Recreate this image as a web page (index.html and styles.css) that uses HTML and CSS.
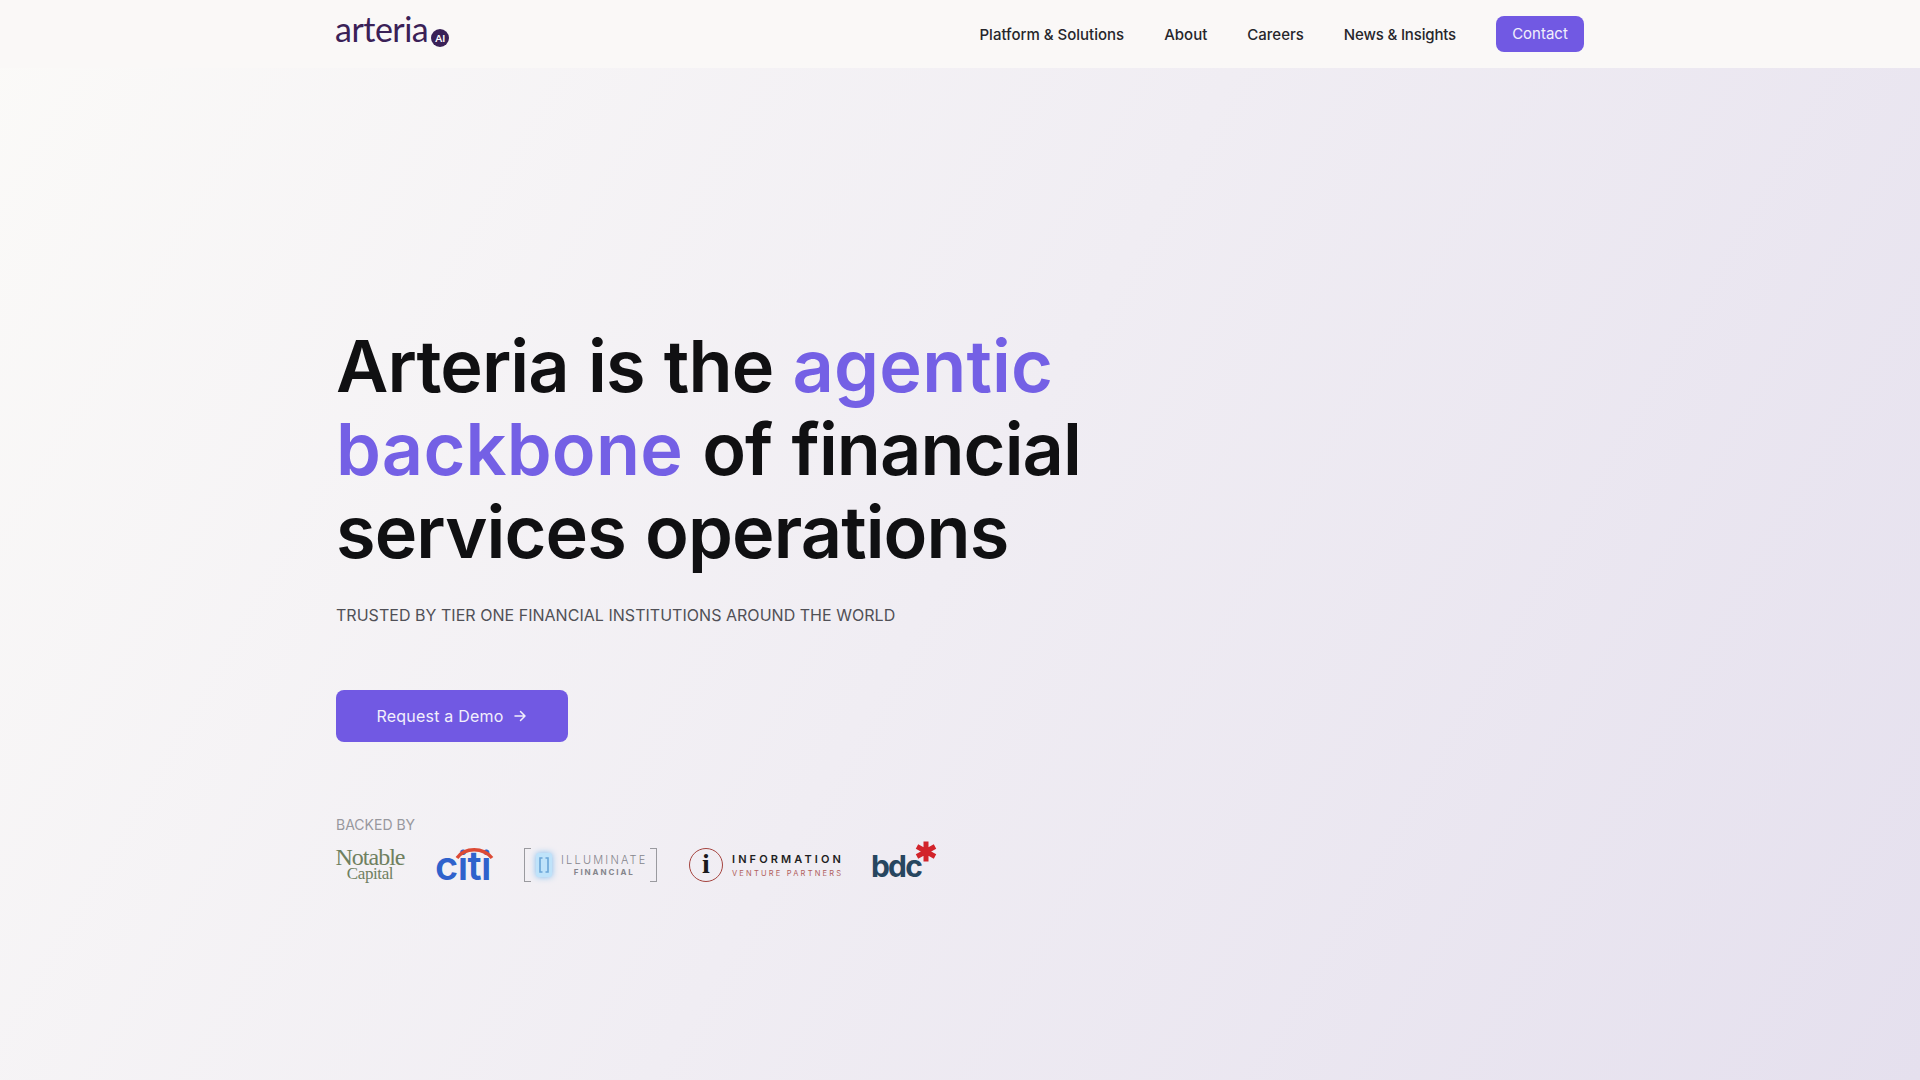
FILE: index.html
```html
<!DOCTYPE html>
<html lang="en">
<head>
  <meta charset="UTF-8" />
  <meta name="viewport" content="width=device-width, initial-scale=1" />
  <title>Arteria AI</title>
  <link rel="stylesheet" href="styles.css">
</head>
<body>
  <header class="site-header">
    <div class="container header-row">
      <a class="brand" href="#">arteria<span class="brand-badge">AI</span></a>
      <nav class="main-nav">
        <a href="#">Platform &amp; Solutions</a>
        <a href="#">About</a>
        <a href="#">Careers</a>
        <a class="nav-news" href="#">News &amp; Insights</a>
        <a class="contact-btn" href="#">Contact</a>
      </nav>
    </div>
  </header>

  <main class="hero">
    <div class="container">
      <h1>Arteria is the <span class="accent">agentic<br>backbone</span> of financial<br>services operations</h1>
      <p class="trusted">Trusted by tier one financial institutions around the world</p>
      <a class="demo-btn" href="#">Request a Demo
        <svg width="14" height="14" viewBox="0 0 14 14" fill="none" stroke="currentColor" stroke-width="1.5" stroke-linecap="round" stroke-linejoin="round"><path d="M2 7h10M7.5 2.5 12 7l-4.5 4.5"/></svg>
      </a>

      <p class="backed">Backed by</p>
      <div class="logos">
        <div class="logo-notable"><span>Notable</span><span class="small">Capital</span></div>

        <div class="logo-citi">
          <svg width="60" height="14" viewBox="0 0 60 14" fill="none"><path d="M22 12C30 1 48 1 57 12" stroke="#dc4a35" stroke-width="3.4"/></svg>
          <span>citi</span>
        </div>

        <div class="logo-illuminate">
          <svg class="illuminate-mark" width="18" height="26" viewBox="0 0 18 26" fill="none">
            <rect x="1" y="1" width="16" height="24" rx="3" fill="#bfe3fa"/>
            <path d="M7.5 6H5v14h2.5M10.5 6H13v14h-2.5" stroke="#6aa5d8" stroke-width="1.6"/>
          </svg>
          <div class="illuminate-text"><span>ILLUMINATE</span><span class="small">FINANCIAL</span></div>
        </div>

        <div class="logo-information">
          <span class="info-circle">i</span>
          <div class="info-text"><span>INFORMATION</span><span class="small">VENTURE PARTNERS</span></div>
        </div>

        <div class="logo-bdc">
          <span>bdc</span>
          <svg class="bdc-star" width="22" height="23" viewBox="0 0 22 22" stroke="#d2232a" stroke-width="5"><path d="M11 1v20M2 6l18 10M20 6 2 16"/></svg>
        </div>
      </div>
    </div>
  </main>
</body>
</html>
```

FILE: styles.css
```css
* {
  box-sizing: border-box;
}

html, body {
  height: 100%;
}

body {
  margin: 0;
  font-family: Inter, 'Noto Sans', sans-serif;
  color: #111;
  background: linear-gradient(120deg, #fbfaf8 0%, #e5e0ee 100%);
  overflow: hidden;
}

a {
  text-decoration: none;
  color: inherit;
}

.container {
  width: 1248px;
  margin: 0 auto;
}

/* Header */
.site-header {
  height: 68px;
  background: #faf8f7;
}

.header-row {
  height: 100%;
  display: flex;
  align-items: center;
  justify-content: space-between;
}

.brand {
  display: flex;
  align-items: flex-end;
  margin: 0 0 10px -1px;
  font-family: Lato, sans-serif;
  font-size: 34px;
  line-height: 40px;
  letter-spacing: -0.5px;
  color: #3a2157;
}

.brand-badge {
  width: 18px;
  height: 18px;
  margin: 0 0 2px 3px;
  border-radius: 50%;
  background: #3a2157;
  color: #fff;
  font-size: 10px;
  font-weight: 700;
  line-height: 18px;
  text-align: center;
  letter-spacing: 0;
}

.main-nav {
  display: flex;
  align-items: center;
  gap: 40px;
  font-size: 15px;
  font-weight: 500;
  color: #26262b;
}

.nav-news {
  letter-spacing: -0.16px;
}

.contact-btn {
  width: 88px;
  height: 36px;
  border-radius: 8px;
  background: #7159e3;
  color: #f2effc;
  font-weight: 400;
  line-height: 36px;
  text-align: center;
}

/* Hero */
.hero {
  padding-top: 256px;
}

h1 {
  margin: 0;
  font-size: 72px;
  font-weight: 600;
  line-height: 83px;
  letter-spacing: -0.9px;
  word-spacing: 2px;
  color: #101012;
}

.accent {
  color: #7460e5;
  letter-spacing: 0.2px;
}

.trusted {
  margin: 30px 0 0;
  font-size: 16px;
  line-height: 24px;
  letter-spacing: 0.03px;
  color: #505056;
  text-transform: uppercase;
}

.demo-btn {
  display: flex;
  align-items: center;
  justify-content: center;
  gap: 10px;
  width: 232px;
  height: 52px;
  margin-top: 63px;
  border-radius: 8px;
  background: #7159e3;
  color: #f2effc;
  font-size: 16px;
  letter-spacing: 0.2px;
}

.backed {
  margin: 72px 0 0;
  font-size: 14px;
  line-height: 22px;
  color: #98989e;
  text-transform: uppercase;
}

/* Investor logos */
.logos {
  display: flex;
  align-items: center;
  gap: 31px;
  margin-top: 6px;
  height: 46px;
}

.logo-notable {
  display: flex;
  flex-direction: column;
  align-items: center;
  width: 68px;
  font-family: 'Liberation Serif', serif;
  font-size: 24px;
  line-height: 18px;
  letter-spacing: -1px;
  color: #6f8060;
}

.logo-notable .small {
  font-size: 17px;
  line-height: 16px;
  letter-spacing: -0.4px;
}

.logo-citi {
  position: relative;
  width: 58px;
  height: 38px;
  font-size: 40px;
  font-weight: 600;
  line-height: 40px;
  letter-spacing: -0.6px;
  color: #2f62cc;
}

.logo-citi svg {
  position: absolute;
  top: 0;
  left: 0;
}

.logo-illuminate {
  display: flex;
  align-items: center;
  gap: 8px;
  width: 133px;
  height: 34px;
  padding-left: 10px;
  border-left: 1px solid #9a9a9f;
  border-right: 1px solid #9a9a9f;
  background:
    linear-gradient(#9a9a9f, #9a9a9f) 0 0/6px 1px no-repeat,
    linear-gradient(#9a9a9f, #9a9a9f) 0 100%/6px 1px no-repeat,
    linear-gradient(#9a9a9f, #9a9a9f) 100% 0/6px 1px no-repeat,
    linear-gradient(#9a9a9f, #9a9a9f) 100% 100%/6px 1px no-repeat;
}

.illuminate-mark {
  flex: none;
  filter: drop-shadow(0 0 3px #7dbcf0);
}

.illuminate-text {
  display: flex;
  flex-direction: column;
  align-items: center;
  font-size: 11px;
  font-weight: 300;
  line-height: 13px;
  letter-spacing: 2.2px;
  color: #85858c;
}

.illuminate-text .small {
  font-size: 8px;
  font-weight: 700;
  line-height: 10px;
  letter-spacing: 1.9px;
}

.logo-information {
  display: flex;
  align-items: center;
  gap: 9px;
  margin-left: 1px;
}

.info-circle {
  width: 34px;
  height: 34px;
  border: 1.5px solid #a5443f;
  border-radius: 50%;
  font-family: 'Liberation Serif', serif;
  font-size: 28px;
  font-weight: 700;
  line-height: 30px;
  text-align: center;
  color: #1a1a1c;
}

.info-text {
  display: flex;
  flex-direction: column;
  gap: 3px;
  font-size: 11px;
  font-weight: 600;
  line-height: 13px;
  letter-spacing: 3.1px;
  color: #1e1e22;
}

.info-text .small {
  font-size: 7.5px;
  font-weight: 400;
  line-height: 9px;
  letter-spacing: 2.2px;
  color: #b0605c;
}

.logo-bdc {
  position: relative;
  width: 66px;
  height: 46px;
  margin-left: -4px;
  font-size: 30px;
  font-weight: 700;
  line-height: 48px;
  letter-spacing: -1.8px;
  color: #27465f;
}

.bdc-star {
  position: absolute;
  top: -2px;
  right: 0;
}
```
